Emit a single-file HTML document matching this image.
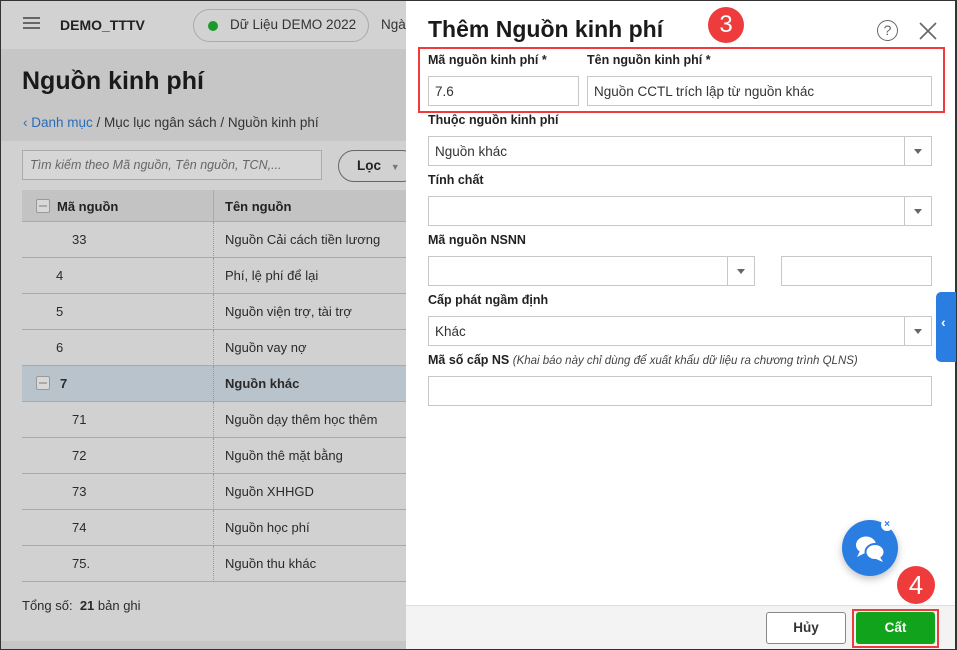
<!DOCTYPE html>
<html><head><meta charset="utf-8"><style>
*{box-sizing:border-box;margin:0;padding:0}
body{width:957px;height:650px;overflow:hidden;font-family:"Liberation Sans","DejaVu Sans",sans-serif;background:#333;position:relative;color:#222}
.abs{position:absolute}
#left{left:1px;top:1px;width:405px;height:648px;background:#d1d1d1;overflow:hidden}
#top{left:0;top:0;width:405px;height:48px;background:#d2d2d2}
#hdr{left:0;top:48px;width:405px;height:92px;background:#c6c6c6}
.row{position:absolute;left:21px;width:385px;height:36px;border-bottom:1px solid #a9a9a9;font-size:13px;color:#2a2a2a}
.row span{position:absolute;top:10px}
.row .c2{left:203px}
.row:before{content:"";position:absolute;left:191px;top:0;height:36px;border-left:1px dotted #999}
.chk{position:absolute;width:14px;height:14px;border:1px solid #999;background:#d8d8d8;border-radius:2px}
.chk:after{content:"";position:absolute;left:2px;top:5px;width:8px;height:1.5px;background:#aaa}
#panel{left:406px;top:1px;width:549px;height:648px;background:#fff}
.lbl{position:absolute;font-size:12.5px;font-weight:bold;color:#222;white-space:nowrap}
.inp{position:absolute;border:1px solid #c8c8c8;height:30px;font-size:13.5px;color:#333;padding:7px 6px;background:#fff}
.dd{position:absolute;right:0;top:0;width:27px;height:28px;border-left:1px solid #c8c8c8}
.dd:after{content:"";position:absolute;left:9px;top:12px;border-left:4.5px solid transparent;border-right:4.5px solid transparent;border-top:5px solid #666}
</style></head><body>
<div id="left" class="abs">
 <div id="top" class="abs">
  <div class="abs" style="left:22px;top:16px;width:17px;height:2px;background:#666;box-shadow:0 5px 0 #666,0 10px 0 #666"></div>
  <div class="abs" style="left:59px;top:16px;font-size:14px;font-weight:bold;color:#222">DEMO_TTTV</div>
  <div class="abs" style="left:192px;top:8px;width:176px;height:33px;border:1px solid #aaa;border-radius:17px"></div>
  <div class="abs" style="left:207px;top:20px;width:10px;height:10px;border-radius:50%;background:#1a9a2a"></div>
  <div class="abs" style="left:229px;top:16px;font-size:13.5px;color:#333">Dữ Liệu DEMO 2022</div>
  <div class="abs" style="left:380px;top:16px;font-size:13.5px;color:#333">Ngà</div>
 </div>
 <div id="hdr" class="abs">
  <div class="abs" style="left:21px;top:18px;font-size:25px;font-weight:bold;color:#1a1a1a">Nguồn kinh phí</div>
  <div class="abs" style="left:22px;top:66px;font-size:13.5px;color:#333"><span style="color:#2b6cb8">‹ Danh mục</span> / Mục lục ngân sách / Nguồn kinh phí</div>
 </div>
 <div class="abs" style="left:21px;top:149px;width:300px;height:30px;border:1px solid #aaa;background:#d6d6d6;font-size:12.5px;font-style:italic;color:#666;padding:7px 7px">Tìm kiếm theo Mã nguồn, Tên nguồn, TCN,...</div>
 <div class="abs" style="left:337px;top:149px;width:80px;height:32px;border:1px solid #666;border-radius:16px;font-size:13.5px;font-weight:bold;padding:7px 18px;white-space:nowrap">Lọc <span style="font-size:9px;color:#777;margin-left:6px">▼</span></div>
 <div class="abs" style="left:21px;top:189px;width:385px;height:32px;background:#c3c3c3;border-bottom:1px solid #a9a9a9;font-size:13px;font-weight:bold">
  <div class="chk" style="left:14px;top:9px"></div>
  <span class="abs" style="left:35px;top:9px">Mã nguồn</span>
  <div class="abs" style="left:191px;top:0;height:32px;border-left:1px solid #aaa"></div>
  <span class="abs" style="left:203px;top:9px">Tên nguồn</span>
 </div>
 <div class="row" style="top:221px"><span style="left:50px">33</span><span class="c2">Nguồn Cải cách tiền lương</span></div>
 <div class="row" style="top:257px"><span style="left:34px">4</span><span class="c2">Phí, lệ phí để lại</span></div>
 <div class="row" style="top:293px"><span style="left:34px">5</span><span class="c2">Nguồn viện trợ, tài trợ</span></div>
 <div class="row" style="top:329px"><span style="left:34px">6</span><span class="c2">Nguồn vay nợ</span></div>
 <div class="row" style="top:365px;background:#b8c3cc;font-weight:bold"><div class="chk" style="left:14px;top:10px"></div><span style="left:38px">7</span><span class="c2">Nguồn khác</span></div>
 <div class="row" style="top:401px"><span style="left:50px">71</span><span class="c2">Nguồn dạy thêm học thêm</span></div>
 <div class="row" style="top:437px"><span style="left:50px">72</span><span class="c2">Nguồn thê mặt bằng</span></div>
 <div class="row" style="top:473px"><span style="left:50px">73</span><span class="c2">Nguồn XHHGD</span></div>
 <div class="row" style="top:509px"><span style="left:50px">74</span><span class="c2">Nguồn học phí</span></div>
 <div class="row" style="top:545px"><span style="left:50px">75.</span><span class="c2">Nguồn thu khác</span></div>
 <div class="abs" style="left:21px;top:597px;font-size:13px;color:#2a2a2a">Tổng số:&nbsp; <b>21</b> bản ghi</div>
 <div class="abs" style="left:0;top:640px;width:405px;height:9px;background:#c6c6c6"></div>
</div>
<div id="panel" class="abs">
 <div class="abs" style="left:22px;top:15px;font-size:23px;font-weight:bold;color:#1a1a1a">Thêm Nguồn kinh phí</div>
 <div class="abs" style="left:302px;top:6px;width:36px;height:36px;border-radius:50%;background:#ee3b3b;color:#fff;font-size:24px;text-align:center;line-height:36px">3</div>
 <div class="abs" style="left:471px;top:19px;width:21px;height:21px;border:1.5px solid #666;border-radius:50%;font-size:14px;color:#666;text-align:center;line-height:18px">?</div>
 <svg class="abs" style="left:512px;top:20px" width="20" height="20"><path d="M2 2L18 18M18 2L2 18" stroke="#666" stroke-width="1.6"/></svg>
 <div class="abs" style="left:12px;top:46px;width:527px;height:66px;border:2px solid #ee3b3b"></div>
 <div class="lbl" style="left:22px;top:52px">Mã nguồn kinh phí *</div>
 <div class="lbl" style="left:181px;top:52px">Tên nguồn kinh phí *</div>
 <div class="inp" style="left:22px;top:75px;width:151px">7.6</div>
 <div class="inp" style="left:181px;top:75px;width:345px">Nguồn CCTL trích lập từ nguồn khác</div>
 <div class="lbl" style="left:22px;top:112px">Thuộc nguồn kinh phí</div>
 <div class="inp" style="left:22px;top:135px;width:504px">Nguồn khác<div class="dd"></div></div>
 <div class="lbl" style="left:22px;top:172px">Tính chất</div>
 <div class="inp" style="left:22px;top:195px;width:504px"><div class="dd"></div></div>
 <div class="lbl" style="left:22px;top:232px">Mã nguồn NSNN</div>
 <div class="inp" style="left:22px;top:255px;width:327px"><div class="dd"></div></div>
 <div class="inp" style="left:375px;top:255px;width:151px"></div>
 <div class="lbl" style="left:22px;top:292px">Cấp phát ngầm định</div>
 <div class="inp" style="left:22px;top:315px;width:504px">Khác<div class="dd"></div></div>
 <div class="lbl" style="left:22px;top:352px">Mã số cấp NS <span style="font-weight:normal;font-style:italic;font-size:11.5px;color:#444">(Khai báo này chỉ dùng để xuất khẩu dữ liệu ra chương trình QLNS)</span></div>
 <div class="inp" style="left:22px;top:375px;width:504px"></div>
 <div class="abs" style="left:530px;top:291px;width:20px;height:70px;background:#2a7de1;border-radius:5px 0 0 5px;color:#fff;font-size:14px;padding:22px 0 0 5px;font-weight:bold">‹</div>
 <div class="abs" style="left:436px;top:519px;width:56px;height:56px;border-radius:50%;background:#2a7de1;box-shadow:0 3px 8px rgba(0,0,0,.25)">
  <svg width="56" height="56"><ellipse cx="24" cy="25" rx="10" ry="8.5" fill="#fff"/><path d="M18 31l-3 6 8-4z" fill="#fff"/><ellipse cx="33" cy="32" rx="9.5" ry="8" fill="#fff" stroke="#2a7de1" stroke-width="2"/><path d="M38 37l3 5-7-3z" fill="#fff"/></svg>
 </div>
 <div class="abs" style="left:475px;top:518px;width:12px;height:12px;border-radius:50%;background:#fff;color:#2a7de1;font-size:10px;text-align:center;line-height:11px;font-weight:bold">×</div>
 <div class="abs" style="left:491px;top:565px;width:38px;height:38px;border-radius:50%;background:#ee3b3b;color:#fff;font-size:26px;text-align:center;line-height:38px">4</div>
 <div class="abs" style="left:0;top:604px;width:549px;height:44px;background:#f3f3f3;border-top:1px solid #ddd"></div>
 <div class="abs" style="left:360px;top:611px;width:80px;height:32px;border:1px solid #888;border-radius:3px;background:#fff;font-size:13.5px;font-weight:bold;text-align:center;line-height:30px;color:#333">Hủy</div>
 <div class="abs" style="left:446px;top:608px;width:87px;height:39px;border:2px solid #ee3b3b"></div>
 <div class="abs" style="left:450px;top:611px;width:79px;height:32px;border-radius:3px;background:#11a31c;font-size:13.5px;font-weight:bold;text-align:center;line-height:32px;color:#fff">Cất</div>
</div>
</body></html>
